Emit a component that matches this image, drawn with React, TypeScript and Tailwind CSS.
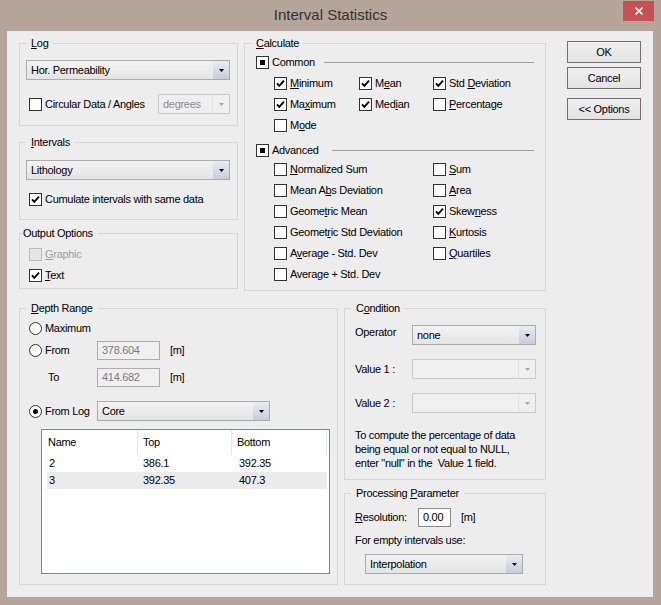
import React from "react";

// accelerator-key label: underlines the char at index `at`
function Acc({ text, at = -1 }: { text: string; at?: number }) {
  if (at < 0) return <>{text}</>;
  return (
    <>
      {text.slice(0, at)}
      <span className="underline underline-offset-[1px]">{text[at]}</span>
      {text.slice(at + 1)}
    </>
  );
}

function Check({
  label,
  at = -1,
  checked = false,
  disabled = false,
  className = "",
}: {
  label: string;
  at?: number;
  checked?: boolean;
  disabled?: boolean;
  className?: string;
}) {
  return (
    <div className={`flex items-center h-[13px] ${className}`}>
      <span
        className={`w-[13px] h-[13px] shrink-0 border flex items-center justify-center ${
          disabled ? "border-[#bcbcbc] bg-[#e6e6e6]" : "border-[#333333] bg-white"
        }`}
      >
        {checked && (
          <svg width="11" height="11" viewBox="0 0 11 11">
            <path d="M2 5.4 L4.3 7.9 L9 2.6" fill="none" stroke="#000" strokeWidth="1.9" />
          </svg>
        )}
      </span>
      <span className={`ml-[3px] whitespace-nowrap leading-[13px] ${disabled ? "text-[#a0a0a0]" : ""}`}>
        <Acc text={label} at={at} />
      </span>
    </div>
  );
}

function Tri({ label, line }: { label: string; line: string }) {
  return (
    <div className="flex items-center h-[13px]">
      <span className="w-[13px] h-[13px] shrink-0 border border-[#333333] bg-white flex items-center justify-center">
        <span className="w-[5px] h-[5px] bg-black" />
      </span>
      <span className="ml-[3px] leading-[13px]">{label}</span>
      <span className={`ml-auto h-px bg-[#a0a0a0] ${line}`} />
    </div>
  );
}

function Radio({ label, on = false }: { label: string; on?: boolean }) {
  return (
    <div className="flex items-center h-[13px]">
      <span className="w-[13px] h-[13px] shrink-0 rounded-full border border-[#333333] bg-white flex items-center justify-center">
        {on && <span className="w-[5px] h-[5px] rounded-full bg-black" />}
      </span>
      <span className="ml-[3px] leading-[13px] whitespace-nowrap">{label}</span>
    </div>
  );
}

function Arrow({ color = "#000" }: { color?: string }) {
  return (
    <svg width="5" height="3" viewBox="0 0 5 3">
      <path d="M0 0H5L2.5 3Z" fill={color} />
    </svg>
  );
}

function Combo({ value = "", className = "", disabled = false }: { value?: string; className?: string; disabled?: boolean }) {
  if (disabled) {
    return (
      <div className={`flex h-[20px] border border-[#c9c9c9] bg-[#efefef] ${className}`}>
        <div className="flex-1 flex items-center pl-[4px] text-[#8d8d8d] border-r border-[#e2e2e2]">{value}</div>
        <div className="w-[16px] flex items-center justify-center">
          <Arrow color="#a8a8a8" />
        </div>
      </div>
    );
  }
  return (
    <div className={`flex h-[20px] border border-[#acacac] bg-gradient-to-b from-[#f3f3f3] to-[#e4e4e4] ${className}`}>
      <div className="flex-1 flex items-center pl-[4px] whitespace-nowrap">{value}</div>
      <div className="w-[16px] flex items-center justify-center bg-gradient-to-b from-[#eaecf2] to-[#c8ccd9]">
        <Arrow />
      </div>
    </div>
  );
}

function Group({
  title,
  at = -1,
  className = "",
  legend = "",
  children,
}: {
  title: string;
  at?: number;
  className?: string;
  legend?: string;
  children: React.ReactNode;
}) {
  return (
    <fieldset className={`border border-[#d5d5d5] px-[6px] shrink-0 ${className}`}>
      <legend className={`px-[5px] leading-[13px] ${legend}`}>
        <Acc text={title} at={at} />
      </legend>
      {children}
    </fieldset>
  );
}

function Button({ label, className = "" }: { label: string; className?: string }) {
  return (
    <div
      className={`h-[22px] w-[74px] border border-[#707070] bg-gradient-to-b from-[#efefef] to-[#e3e3e3] flex items-center justify-center ${className}`}
    >
      {label}
    </div>
  );
}

const rows = [
  { name: "2", top: "386.1", bottom: "392.35" },
  { name: "3", top: "392.35", bottom: "407.3" },
];

export default function App() {
  return (
    <div className="w-[661px] h-[605px] bg-[#b5a59a] flex flex-col font-['Liberation_Sans',Arial,sans-serif] text-[11px] tracking-[-0.3px] text-black">
      {/* TITLE BAR */}
      <div className="h-[31px] grid grid-cols-[1fr_auto_1fr] shrink-0">
        <div />
        <div className="pt-[6px] text-[15px] leading-[18px] tracking-normal text-[#333333]">Interval Statistics</div>
        <div className="flex justify-end">
          <div className="mt-[1px] mr-[7px] w-[31px] h-[20px] bg-[#c75050] flex items-center justify-center">
            <svg width="8" height="8" viewBox="0 0 8 8">
              <path d="M0.5 0.5L7.5 7.5M7.5 0.5L0.5 7.5" stroke="#fff" strokeWidth="1.6" />
            </svg>
          </div>
        </div>
      </div>

      {/* CLIENT */}
      <div className="ml-[7px] mr-[8px] h-[566px] bg-[#ededed] pl-[12px] pt-[6px]">
        {/* TOP ROW */}
        <div className="flex items-start">
          <div className="w-[219px] flex flex-col">
            <Group title="Log" at={0} className="h-[89px]">
              <Combo value="Hor. Permeability" className="mt-[10px] w-[204px]" />
              <div className="mt-[14px] h-[20px] flex items-center">
                <Check label="Circular Data / Angles" className="ml-[3px]" />
                <Combo value="degrees" disabled className="ml-auto mr-[1px] w-[72px]" />
              </div>
            </Group>

            <Group title="Intervals" at={0} className="h-[84px] mt-[10px]">
              <Combo value="Lithology" className="mt-[11px] w-[204px]" />
              <Check label="Cumulate intervals with same data" checked className="mt-[13px] ml-[3px]" />
            </Group>

            <Group title="Output Options" className="h-[62px] mt-[7px]" legend="ml-[-4px] pl-[1px]">
              <Check label="Graphic" at={0} disabled className="mt-[8px] ml-[3px]" />
              <Check label="Text" at={0} checked className="mt-[8px] ml-[3px]" />
            </Group>
          </div>

          <Group title="Calculate" at={0} className="ml-[6px] w-[302px] h-[254px]">
            <div className="pl-[5px] pr-[5px]">
              <div className="mt-[6px]">
                <Tri label="Common" line="w-[210px]" />
              </div>
              <div className="mt-[8px] pl-[18px] grid grid-cols-[85px_74px_1fr] gap-y-[8px]">
                <Check label="Minimum" at={0} checked />
                <Check label="Mean" at={1} checked />
                <Check label="Std Deviation" at={4} checked />
                <Check label="Maximum" at={2} checked />
                <Check label="Median" at={3} checked />
                <Check label="Percentage" at={0} />
                <Check label="Mode" at={1} />
              </div>
              <div className="mt-[12px]">
                <Tri label="Advanced" line="w-[202px]" />
              </div>
              <div className="mt-[6px] pl-[18px] grid grid-cols-[159px_1fr] gap-y-[8px]">
                <Check label="Normalized Sum" at={0} />
                <Check label="Sum" at={0} />
                <Check label="Mean Abs Deviation" at={6} />
                <Check label="Area" at={0} />
                <Check label="Geometric Mean" at={5} />
                <Check label="Skewness" at={4} checked />
                <Check label="Geometric Std Deviation" at={6} />
                <Check label="Kurtosis" at={0} />
                <Check label="Average - Std. Dev" at={1} />
                <Check label="Quartiles" at={0} />
                <Check label="Average + Std. Dev" at={5} />
              </div>
            </div>
          </Group>

          <div className="ml-[21px] mt-[4px] flex flex-col">
            <Button label="OK" />
            <Button label="Cancel" className="mt-[4px]" />
            <Button label="<< Options" className="mt-[9px]" />
          </div>
        </div>

        {/* BOTTOM ROW */}
        <div className="mt-[11px] flex items-start">
          <Group title="Depth Range" at={0} className="w-[319px] h-[283px]">
            <div className="mt-[7px] ml-[3px]">
              <Radio label="Maximum" />
            </div>
            <div className="mt-[6px] h-[19px] flex items-center">
              <div className="w-[71px] pl-[3px]">
                <Radio label="From" />
              </div>
              <div className="w-[63px] h-[19px] border border-[#acacac] bg-[#efefef] text-[#7a7a7a] flex items-center pl-[4px]">
                378.604
              </div>
              <span className="ml-[10px]">[m]</span>
            </div>
            <div className="mt-[8px] h-[19px] flex items-center">
              <div className="w-[71px] pl-[22px]">To</div>
              <div className="w-[63px] h-[19px] border border-[#acacac] bg-[#efefef] text-[#7a7a7a] flex items-center pl-[4px]">
                414.682
              </div>
              <span className="ml-[10px]">[m]</span>
            </div>
            <div className="mt-[14px] h-[20px] flex items-center">
              <div className="w-[71px] pl-[3px]">
                <Radio label="From Log" on />
              </div>
              <Combo value="Core" className="w-[173px]" />
            </div>

            <div className="mt-[8px] ml-[15px] w-[289px] h-[145px] border border-[#828790] bg-white">
              <div className="h-[25px] grid grid-cols-[96px_94px_95px] items-stretch">
                <div className="border-r border-[#dfe7f1] pl-[6px] flex items-center">Name</div>
                <div className="border-r border-[#dfe7f1] pl-[5px] flex items-center">Top</div>
                <div className="border-r border-[#dfe7f1] pl-[5px] flex items-center">Bottom</div>
              </div>
              <div className="ml-[5px] w-[280px]">
                {rows.map((r, i) => (
                  <div
                    key={r.name}
                    className={`h-[17px] grid grid-cols-[91px_94px_95px] items-center ${i === 1 ? "bg-[#ebebeb]" : ""}`}
                  >
                    <span className="pl-[2px]">{r.name}</span>
                    <span className="pl-[5px]">{r.top}</span>
                    <span className="pl-[7px]">{r.bottom}</span>
                  </div>
                ))}
              </div>
            </div>
          </Group>

          <div className="ml-[6px] w-[202px] flex flex-col">
            <Group title="Condition" at={1} className="h-[178px]">
              <div className="pl-[4px] pr-[3px]">
                <div className="mt-[10px] h-[20px] flex items-center">
                  <span className="w-[57px] mb-[5px]">Operator</span>
                  <Combo value="none" className="flex-1" />
                </div>
                <div className="mt-[14px] h-[20px] flex items-center">
                  <span className="w-[57px]">Value 1 :</span>
                  <Combo disabled className="flex-1" />
                </div>
                <div className="mt-[14px] h-[20px] flex items-center">
                  <span className="w-[57px]">Value 2 :</span>
                  <Combo disabled className="flex-1" />
                </div>
                <p className="mt-[15px] leading-[14px] whitespace-pre">
                  {"To compute the percentage of data\nbeing equal or not equal to NULL,\nenter \"null\" in the  Value 1 field."}
                </p>
              </div>
            </Group>

            <Group title="Processing Parameter" at={11} className="h-[98px] mt-[7px]">
              <div className="pl-[4px]">
                <div className="mt-[8px] h-[19px] flex items-center">
                  <span className="w-[63px]">
                    <Acc text="Resolution:" at={0} />
                  </span>
                  <div className="w-[33px] h-[19px] border border-[#8c8c8c] bg-white flex items-center pl-[4px]">0.00</div>
                  <span className="ml-[10px]">[m]</span>
                </div>
                <div className="mt-[7px] leading-[13px]">For empty intervals use:</div>
                <Combo value="Interpolation" className="mt-[7px] ml-[10px] w-[158px]" />
              </div>
            </Group>
          </div>
        </div>
      </div>
    </div>
  );
}
